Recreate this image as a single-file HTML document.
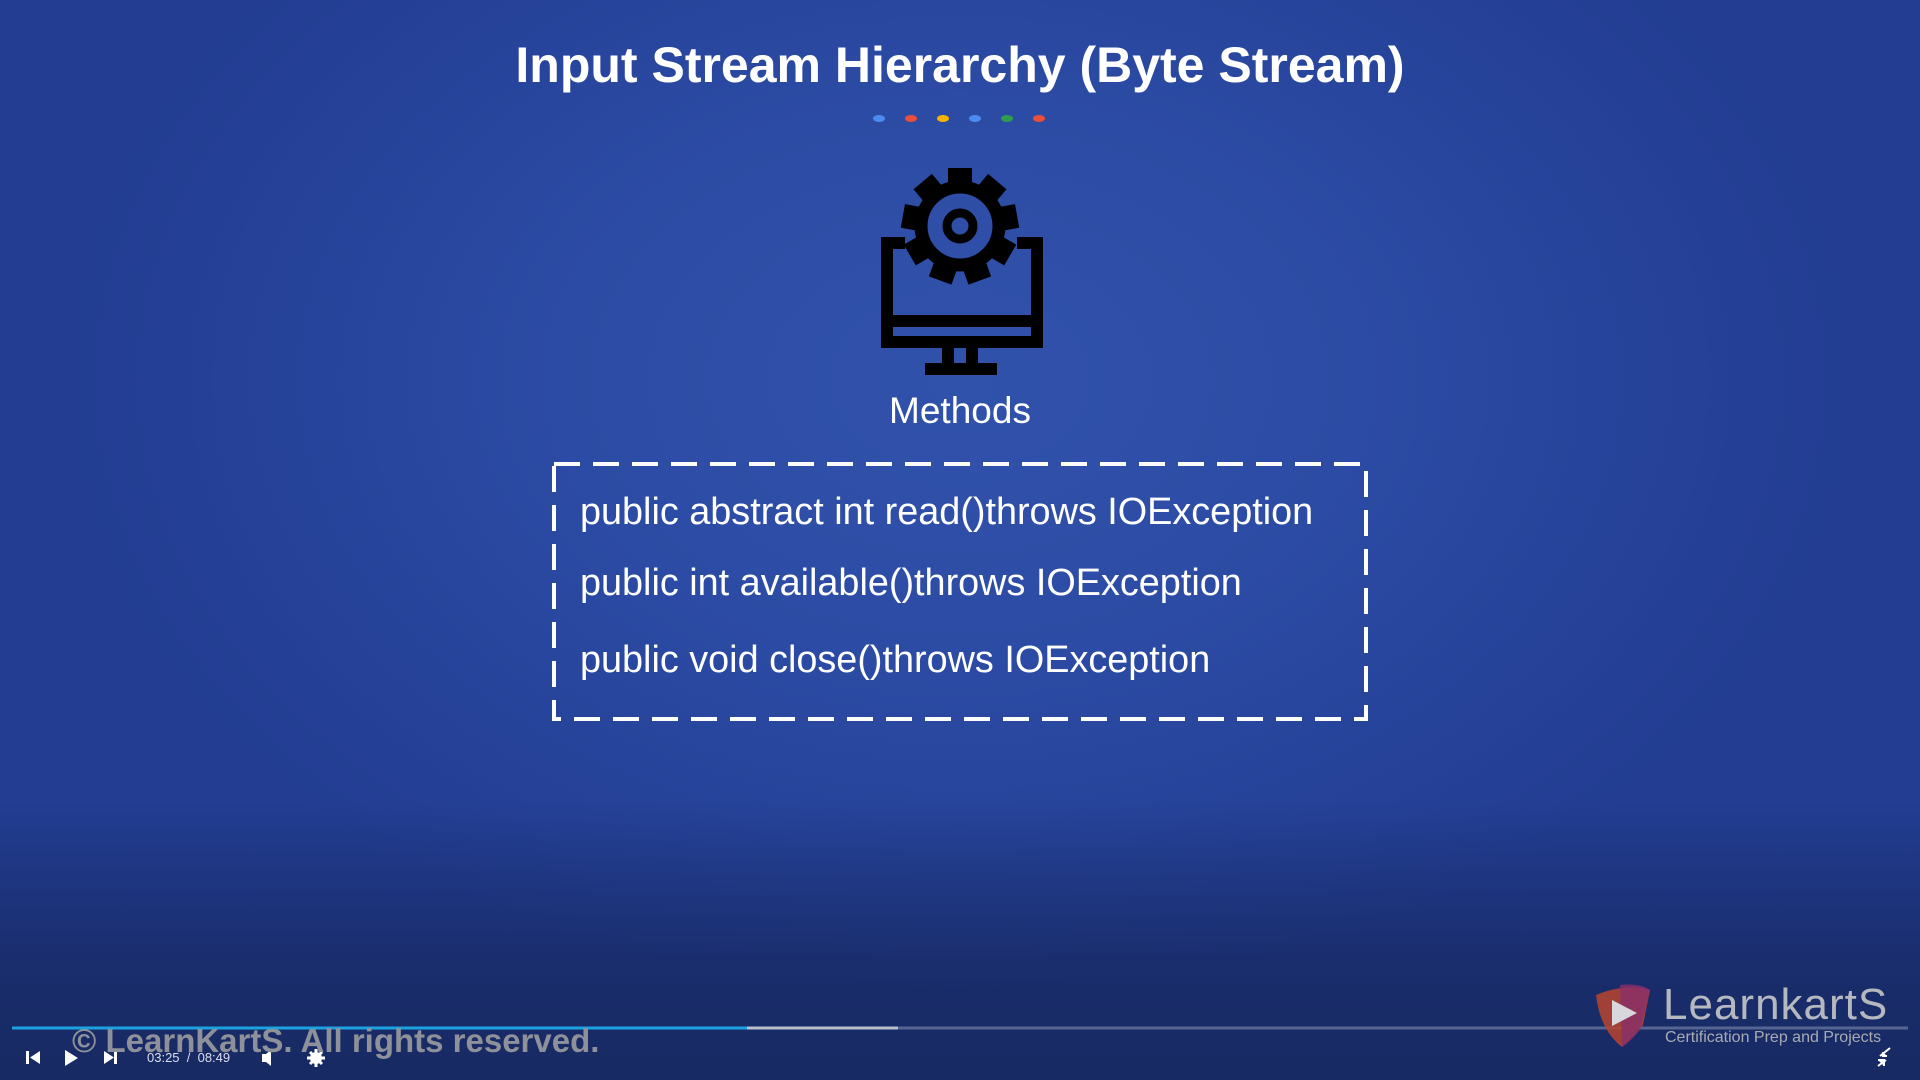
<!DOCTYPE html>
<html><head><meta charset="utf-8"><style>
html,body{margin:0;padding:0}
body{width:1920px;height:1080px;overflow:hidden;position:relative;font-family:"Liberation Sans",sans-serif;
background:radial-gradient(ellipse 900px 620px at 960px 380px,#3152ab 0%,#2c4ba4 45%,#26439a 75%,#223d92 100%);}
.fade{position:absolute;left:0;top:800px;width:1920px;height:280px;background:linear-gradient(to bottom,rgba(20,35,85,0),rgba(22,38,92,0.7) 60%,#172a63 100%)}
.title{position:absolute;top:36px;left:0;width:1920px;text-align:center;color:#fff;font-weight:bold;font-size:50px}
.dot{position:absolute;top:115px;width:12px;height:7px;border-radius:50%}
.methods{position:absolute;top:390px;left:0;width:1920px;text-align:center;color:#fff;font-size:37px}
.line{position:absolute;left:580px;color:#fff;font-size:37.8px;white-space:nowrap}
.copy{position:absolute;left:72px;top:1022px;color:#8e9199;font-weight:bold;font-size:33px;white-space:nowrap}
.ctl{position:absolute;color:#fff}
</style></head><body>
<div class="fade"></div>
<div class="title">Input Stream Hierarchy (Byte Stream)</div>
<div class="dot" style="left:873px;background:#4a8cf0"></div>
<div class="dot" style="left:905px;background:#ea4f3c"></div>
<div class="dot" style="left:937px;background:#f4b400"></div>
<div class="dot" style="left:969px;background:#4a8cf0"></div>
<div class="dot" style="left:1001px;background:#2e9e4e"></div>
<div class="dot" style="left:1033px;background:#ea4f3c"></div>

<svg style="position:absolute;left:0;top:0" width="1920" height="1080">
 <g fill="none" stroke="#000" stroke-width="12" stroke-linejoin="miter">
  <path d="M905 243 H887 V342 H1037 V243 H1017"/>
  <line x1="887" y1="321" x2="1037" y2="321"/>
  <path d="M948 348 V363 M972 348 V363"/>
  <line x1="925" y1="369" x2="997" y2="369"/>
 </g>
 <g transform="translate(960,226)">
  <g id="t" fill="#000">
   <rect x="-12" y="-58" width="24" height="20"/>
  </g>
  <use href="#t" transform="rotate(40)"/><use href="#t" transform="rotate(80)"/><use href="#t" transform="rotate(120)"/>
  <use href="#t" transform="rotate(160)"/><use href="#t" transform="rotate(200)"/><use href="#t" transform="rotate(240)"/>
  <use href="#t" transform="rotate(280)"/><use href="#t" transform="rotate(320)"/>
  <circle r="39" fill="none" stroke="#000" stroke-width="13"/>
  <circle r="13" fill="none" stroke="#000" stroke-width="9"/>
 </g>
 <rect x="554" y="464" width="812" height="255" fill="none" stroke="#fff" stroke-width="4" stroke-dasharray="26 13"/>
 <line x1="12" y1="1028" x2="1908" y2="1028" stroke="rgba(200,210,230,0.35)" stroke-width="3"/>
 <line x1="747" y1="1028" x2="898" y2="1028" stroke="#b9bfcc" stroke-width="3"/>
 <line x1="12" y1="1028" x2="747" y2="1028" stroke="#1aa3e0" stroke-width="3"/>
 <g fill="#fff">
  <rect x="26" y="1051" width="3" height="13"/><path d="M40 1051 V1064 L30 1057.5Z"/>
  <path d="M65 1050 L78 1058 L65 1066Z"/>
  <path d="M104 1051 L114 1057.5 L104 1064Z"/><rect x="114" y="1051" width="3" height="13"/>
  <path d="M262 1054 H266 L271 1050 V1066 L266 1062 H262Z"/>
  <circle cx="316" cy="1058" r="6"/>
 </g>
 <circle cx="316" cy="1058" r="2.5" fill="#1d2f6a"/>
 <g stroke="#fff" stroke-width="3"><path d="M316 1049V1067M307 1058H325M310 1052L322 1064M322 1052L310 1064"/></g>
 <g stroke="#fff" stroke-width="2" fill="#fff"><path d="M1880 1056 L1890 1048 M1883 1052 V1056 H1887 M1878 1066 L1886 1060 M1884 1066 V1060 H1878"/></g>
 <path d="M1596 995 Q1625 983 1650 990 L1643 1025 Q1630 1040 1622 1047 Q1600 1030 1596 995Z" fill="#b8442e" opacity="0.85"/>
 <path d="M1620 985 Q1640 983 1650 990 L1640 1030 Q1630 1042 1622 1047Z" fill="#8a2e6a" opacity="0.8"/>
 <path d="M1612 1000 L1637 1013 L1612 1026Z" fill="#d8d8dc"/>
</svg>
<div class="ctl" style="left:147px;top:1050px;font-size:13px;color:#dde">03:25&nbsp; / &nbsp;08:49</div>
<div class="methods">Methods</div>
<div class="line" style="top:491px">public abstract int read()throws IOException</div>
<div class="line" style="top:562px">public int available()throws IOException</div>
<div class="line" style="top:639px">public void close()throws IOException</div>
<div class="copy">© LearnKartS. All rights reserved.</div>
<div style="position:absolute;left:1663px;top:980px;color:#b6b8c0;font-size:44px;letter-spacing:1px">LearnkartS</div>
<div style="position:absolute;left:1665px;top:1029px;color:#a9abb3;font-size:16px">Certification Prep and Projects</div>
</body></html>
